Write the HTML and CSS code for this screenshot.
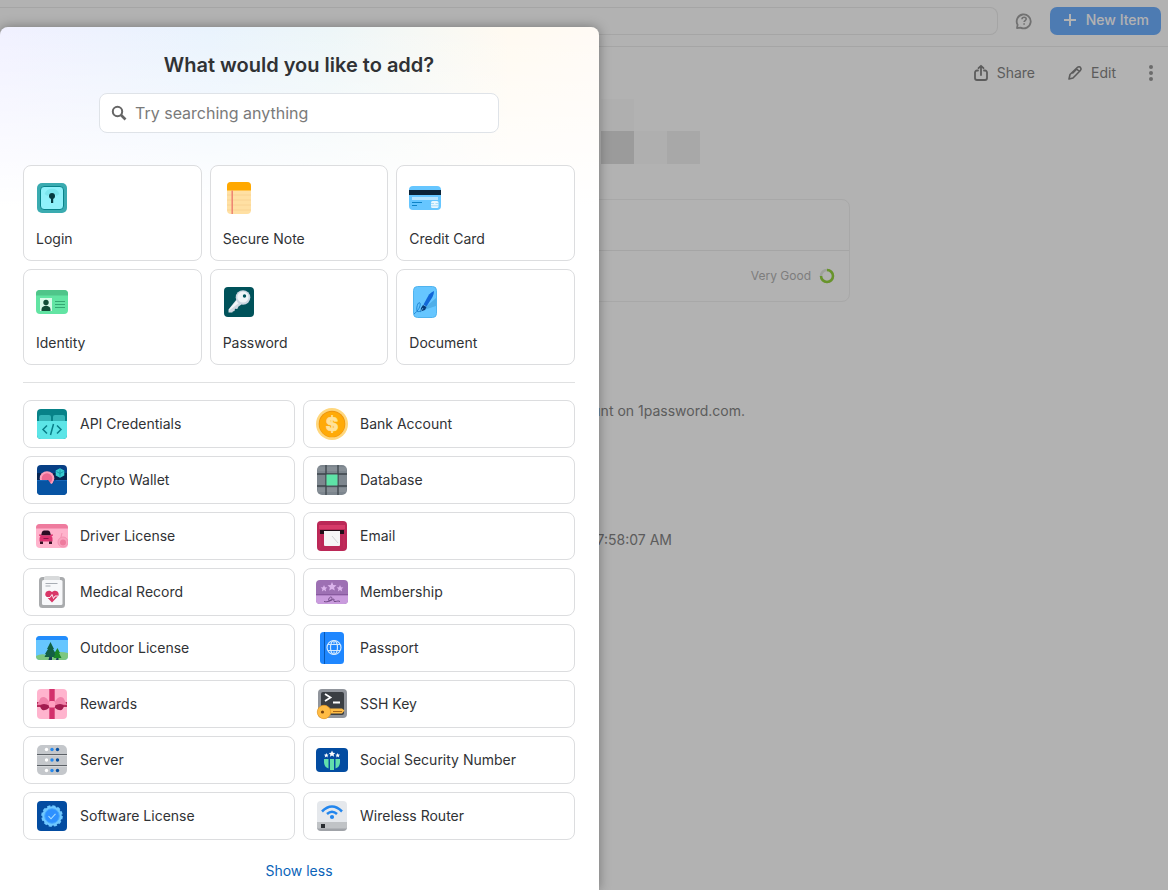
FILE: index.html
```html
<!DOCTYPE html>
<html lang="en">
<head>
    <meta charset="UTF-8">
    <meta name="viewport" content="width=device-width, initial-scale=1.0">
    <title>New Item</title>
    <link rel="stylesheet" href="styles.css">
</head>
<body>

    <div class="app">
        <header class="topbar">
            <input class="topbar-search" type="search" aria-label="Search all items">
            <button class="icon-button" aria-label="Help">
                <svg width="18" height="18" viewBox="0 0 18 18" fill="none" stroke="currentColor" stroke-width="1.8">
                    <path d="M2 16.200l.6-3.400A7 7 0 1 1 5.500 15.600z" stroke-linejoin="round"/>
                    <path d="M7 7.300c0-2.800 4.200-2.600 4.200-.2 0 1.500-2.100 1.500-2.100 3M9.100 11.200v1.600" stroke-width="1.600"/>
                </svg>
            </button>
            <button class="new-item">
                <svg width="14" height="14" viewBox="0 0 14 14" stroke="currentColor" stroke-width="2"><path d="M7 1v12M1 7h12"/></svg>
                New Item
            </button>
        </header>

        <div class="actions">
            <button class="action">
                <svg width="16" height="18" viewBox="0 0 16 18" fill="none" stroke="currentColor" stroke-width="1.8" stroke-linecap="round" stroke-linejoin="round">
                    <path d="M5 6.500H4a2 2 0 0 0-2 2V14a2 2 0 0 0 2 2h8a2 2 0 0 0 2-2V8.500a2 2 0 0 0-2-2h-1M8 11V2M5.500 4.200L8 1.800l2.500 2.400"/>
                </svg>
                Share
            </button>
            <button class="action">
                <svg width="16" height="16" viewBox="0 0 16 16" fill="none" stroke="currentColor" stroke-width="1.6" stroke-linejoin="round">
                    <path d="M2 14l1-4.500 7.500-7.200c1-.9 2.400-.5 3 .2.700.8.800 2-.1 3L6 13zM9.300 4.500l-4 4M9.300 3.500l3.200 3.200"/>
                </svg>
                Edit
            </button>
            <button class="icon-button more" aria-label="More actions">
                <svg width="6" height="18" viewBox="0 0 6 18" fill="currentColor"><circle cx="3" cy="3" r="2"/><circle cx="3" cy="9" r="2"/><circle cx="3" cy="15" r="2"/></svg>
            </button>
        </div>

        <main class="detail">
            <div class="mosaic">
                <span class="tile-pale"></span><span></span><span></span>
                <span class="tile-dark"></span><span class="tile-faint"></span><span class="tile-mid"></span>
            </div>
            <div class="fields">
                <div class="field"></div>
                <div class="field strength">
                    Very Good
                    <svg width="16" height="16" viewBox="0 0 16 16" fill="none" stroke-width="2.500">
                        <circle cx="8" cy="8" r="6" stroke="#e4e8e0"/>
                        <path d="M8 2a6 6 0 1 1-6 6" stroke="#95d43e"/>
                    </svg>
                </div>
            </div>
            <p class="hint">account on 1password.com.</p>
            <p class="modified">7:58:07 AM</p>
        </main>
    </div>

    <div class="overlay">
        <section class="dialog" role="dialog" aria-labelledby="dialogTitle">
            <h1 id="dialogTitle">What would you like to add?</h1>

            <label class="search">
                <svg width="16" height="16" viewBox="0 0 16 16" fill="none" stroke="currentColor" stroke-width="2"><circle cx="6.500" cy="6.500" r="4.700"/><path d="M10 10l4.500 4.500" stroke-width="2.600"/></svg>
                <input type="text" placeholder="Try searching anything" aria-label="Try searching anything">
            </label>

            <div class="featured">
                <button class="card">
                    <svg class="icon" viewBox="0 0 32 32">
                        <rect x="1" y="1" width="30" height="30" rx="5" fill="#3aabb0"/>
                        <rect x="4.500" y="4.500" width="23" height="23" rx="3.500" fill="#8ff1fa" stroke="#08838a"/>
                        <path d="M8.500 12a8 8 0 0 1 15 0l-3 2a5 5 0 0 0-9 0z" fill="#7ce6ee"/>
                        <circle cx="16" cy="14" r="3" fill="#053b40"/><path d="M15 15h2.200v6h-2.200z" fill="#053b40"/>
                    </svg>
                    Login
                </button>
                <button class="card">
                    <svg class="icon" viewBox="0 0 32 32">
                        <rect x="4" width="24" height="32" rx="4" fill="#ffe0a3"/>
                        <path d="M4 8.500V4a4 4 0 0 1 4-4h16a4 4 0 0 1 4 4v4.500z" fill="#ffa800"/>
                        <path d="M4 13h24M4 18h24M4 23h24M4 28h24" stroke="#f8d08f" stroke-width=".8"/>
                        <path d="M9.200 8.500V32" stroke="#ee8272" stroke-width="1.500"/>
                    </svg>
                    Secure Note
                </button>
                <button class="card">
                    <svg class="icon" viewBox="0 0 32 32">
                        <rect y="4" width="32" height="24" rx="4" fill="#66c6ff"/>
                        <path d="M0 8h32v5H0z" fill="#0a2236"/>
                        <path d="M3 15h26v3H3z" fill="#b8e5ff"/>
                        <path d="M3 20.500h10M3 23.500h5" stroke="#0d83c8"/>
                        <rect x="22" y="19" width="7.500" height="7" rx="1.500" fill="#e8f7ff"/>
                        <path d="M22 21.500h3M26.500 21.500h3M22 23.800h7.500" stroke="#8bd0f7" stroke-width=".7"/>
                    </svg>
                    Credit Card
                </button>
                <button class="card">
                    <svg class="icon" viewBox="0 0 32 32">
                        <rect y="4" width="32" height="24" rx="4" fill="#62e4a3"/>
                        <path d="M0 9.500V8a4 4 0 0 1 4-4h24a4 4 0 0 1 4 4v1.500z" fill="#4fc58a"/>
                        <path d="M4 12h12v13H4z" fill="#d9fbe9"/>
                        <circle cx="10" cy="16.500" r="2.700" fill="#124d36"/><path d="M5.500 25v-1.500c0-5 9-5 9 0V25z" fill="#124d36"/>
                        <path d="M19 15.500h10M19 18.500h10M19 21.500h10" stroke="#35a873"/>
                    </svg>
                    Identity
                </button>
                <button class="card">
                    <svg class="icon" viewBox="0 0 32 32">
                        <rect x="1" y="1" width="30" height="30" rx="4" fill="#00525a"/>
                        <path d="M13.500 13.500l5 5-3 2-1.200 2.500-2.300-.2-.5 2.300-1.700.4-.5 1H5.500v-3z" fill="#d0d9e2"/>
                        <path d="M14 14L6 23.500v1L16 17z" fill="#f2f5f8"/>
                        <circle cx="20" cy="11.500" r="7.300" fill="#cbd6e1"/><circle cx="20" cy="11" r="5.600" fill="#f1f5f8"/>
                        <circle cx="21.500" cy="10" r="1.700" fill="#00525a"/>
                    </svg>
                    Password
                </button>
                <button class="card">
                    <svg class="icon" viewBox="0 0 32 32">
                        <rect x="4.500" y=".5" width="23" height="31" rx="4" fill="#66c6ff" stroke="#50b3ee"/>
                        <path d="M27 12v8L12 25z" fill="#50afe9"/>
                        <path d="M14.500 18.500L20 8.500q3-3 5-3.500 0 3-1.500 6L17.500 20.500z" fill="#1267d7"/>
                        <path d="M14 19l3.500 2-1.500 3-4.500 1.500.5-3.500z" fill="#073a78"/><path d="M12 25l2-3" stroke="#66c6ff" stroke-width=".8"/>
                        <path d="M5 28c4-3 7-8 6-11-2-2-4 5-3 8 1 2 3-1 4 1" fill="none" stroke="#1278ca" stroke-width=".8"/>
                    </svg>
                    Document
                </button>
            </div>

            <hr>

            <div class="more-items">
                <button class="row">
                    <svg class="icon" viewBox="0 0 32 32">
                        <rect x="1" y="1" width="30" height="30" rx="4" fill="#078288"/>
                        <rect x="3" y="7" width="12" height="12" rx="2" fill="#35b5b8"/><rect x="17" y="7" width="12" height="12" rx="2" fill="#35b5b8"/>
                        <path d="M1 13h30v14a4 4 0 0 1-4 4H5a4 4 0 0 1-4-4z" fill="#5ce5e7"/>
                        <path d="M11 17.500l-4 4 4 4M21 17.500l4 4-4 4M17.500 16l-3 11" fill="none" stroke="#087e88" stroke-width="1.500"/>
                    </svg>
                    API Credentials
                </button>
                <button class="row">
                    <svg class="icon" viewBox="0 0 32 32">
                        <circle cx="16" cy="16" r="16" fill="#ffd77d"/><circle cx="16" cy="16" r="13.300" fill="#ed9610"/><circle cx="16" cy="16.300" r="12.600" fill="#ffaa08"/>
                        <text x="16" y="22.500" text-anchor="middle" font-size="19" font-weight="800" fill="#ffe29a" stroke="#ffe29a" stroke-width=".6">$</text>
                    </svg>
                    Bank Account
                </button>
                <button class="row">
                    <svg class="icon" viewBox="0 0 32 32">
                        <rect x="1" y="1" width="30" height="30" rx="4" fill="#073f85"/>
                        <path d="M1 9h30v7H1z" fill="#062551"/>
                        <circle cx="11" cy="14.500" r="7.300" fill="#ff9ebb"/><circle cx="11" cy="14.500" r="5.300" fill="#ef6891"/>
                        <path d="M24 4.200l4.300 2.400v4.800L24 13.800l-4.300-2.400V6.600z" fill="#38cbd0"/><path d="M24 5.500v7M20.500 7.500L24 9.500l3.500-2" fill="none" stroke="#118d9e" stroke-width=".8"/>
                        <path d="M1 16h11c1 0 2 4 4 4s1-4 3-4h12v11a4 4 0 0 1-4 4H5a4 4 0 0 1-4-4z" fill="#0754a3"/>
                        <path d="M1 16.500h10M20 16.500h11" stroke="#1767b8"/>
                    </svg>
                    Crypto Wallet
                </button>
                <button class="row">
                    <svg class="icon" viewBox="0 0 32 32">
                        <rect x="1" y="1" width="30" height="30" rx="5" fill="#7d868e"/>
                        <path d="M2 5h28M2 26h28" stroke="#878f96" stroke-width="4"/>
                        <path d="M10 1v30M22 1v30M1 10h30M1 22h30" stroke="#3c444b" stroke-width="1.300"/>
                        <path d="M10.500 10.500h11v11h-11z" fill="#5ee3a7"/>
                    </svg>
                    Database
                </button>
                <button class="row">
                    <svg class="icon" viewBox="0 0 32 32">
                        <rect y="4" width="32" height="24" rx="4" fill="#ffb3cc"/>
                        <path d="M0 8.500V8a4 4 0 0 1 4-4h24a4 4 0 0 1 4 4v.5z" fill="#ee7b9e"/>
                        <path d="M6 12q.5-1.500 2-1.500h4q1.500 0 2 1.500l1 3.500H5z" fill="#2b0c23"/>
                        <path d="M3 14.500h2l1 1h8l1-1h2v1l-1.500.8q1 1 1 2.200v3h-13v-3q0-1.200 1-2.200L3 15.500z" fill="#dc326f"/>
                        <path d="M4 21.500h3v2.500H4zM13 21.500h3v2.500h-3z" fill="#391024"/><path d="M7.500 18.500h5" stroke="#8e174b"/>
                        <circle cx="27" cy="22" r="5" fill="#f9a3bf" stroke="#f491b1"/><circle cx="27" cy="22.500" r="3" fill="#ee7b9e"/><path d="M25 17l1-4" fill="none" stroke="#f491b1"/>
                    </svg>
                    Driver License
                </button>
                <button class="row">
                    <svg class="icon" viewBox="0 0 32 32">
                        <rect x="1" y="1" width="30" height="30" rx="4" fill="#bb2857"/>
                        <path d="M3 5h26v4H3z" fill="#d63a69"/><path d="M4 10h24v4H4z" fill="#211019"/>
                        <path d="M8 11h16v14q0 1-1 1H9q-1 0-1-1z" fill="#f5f5f6"/><path d="M16 16l6 7" stroke="#c8c9cc" stroke-width=".8"/>
                        <path d="M4 14v14M28 14v14" stroke="#c62f5f"/>
                    </svg>
                    Email
                </button>
                <button class="row">
                    <svg class="icon" viewBox="0 0 32 32">
                        <rect x="3" y="1" width="26" height="31" rx="3.500" fill="#a9abad"/><rect x="6" y="4" width="20.500" height="25" rx="1.500" fill="#f7f8fa"/>
                        <path d="M8 4V2q0-2 2-2h12q2 0 2 2v2z" fill="#d8dadb"/><path d="M9.500 7.500h12M9.500 10h5" stroke="#a8adb4"/>
                        <path d="M16 26.500L9.800 20c-2-3 2-7.500 6.200-4 4.200-3.500 8.200 1 6.200 4z" fill="#d93667"/><path d="M9.500 21.500H14l2-3 1.500 4 1.500-2.500h3" fill="none" stroke="#fff" stroke-width=".9"/>
                    </svg>
                    Medical Record
                </button>
                <button class="row">
                    <svg class="icon" viewBox="0 0 32 32">
                        <rect y="4" width="32" height="24" rx="4" fill="#9d70b3"/><path d="M0 19h32v5a4 4 0 0 1-4 4H4a4 4 0 0 1-4-4z" fill="#c99bdd"/><path d="M0 18.800h32" stroke="#7f5298"/>
                        <path d="M16 6l1.300 3 3.200.3-2.400 2.100.7 3.200-2.800-1.700-2.800 1.700.7-3.200-2.400-2.100 3.200-.3zM8 9l1 2.200 2.400.2-1.800 1.600.5 2.400L8 14.100l-2.100 1.300.5-2.400-1.800-1.600 2.400-.2zM24 9l1 2.200 2.400.2-1.800 1.600.5 2.400-2.100-1.300-2.100 1.300.5-2.400-1.800-1.600 2.400-.2z" fill="#dbb4ec"/>
                        <path d="M8 25.500c4 1 7-1 8-3 0-2-2-2-3 0s0 3 2 2 3-2 3-1-1 2 1 2 3-1 5 0" fill="none" stroke="#68417d" stroke-width=".9"/>
                    </svg>
                    Membership
                </button>
                <button class="row">
                    <svg class="icon" viewBox="0 0 32 32">
                        <rect y="4" width="32" height="24" rx="4" fill="#66c6ff"/><path d="M0 8a4 4 0 0 1 4-4h24a4 4 0 0 1 4 4z" fill="#238dfc"/>
                        <path d="M0 24q5-3 11-1 11-5 21-2v3a4 4 0 0 1-4 4H4a4 4 0 0 1-4-4z" fill="#7dc780"/>
                        <path d="M13.500 24h2.500v4h-3.500zM21 24h1.500v4H20z" fill="#173b5b"/>
                        <path d="M14.500 10l3.500 7h-1l3 5h-1l1.500 3H8.500l1.500-3H9l3-5h-1z" fill="#126044"/><path d="M21.500 16l2.500 5h-1l2.500 5h-8l2-5h-1z" fill="#198427"/>
                    </svg>
                    Outdoor License
                </button>
                <button class="row">
                    <svg class="icon" viewBox="0 0 32 32">
                        <rect x="4" width="24" height="32" rx="3.500" fill="#1f87ff"/><path d="M8.500 0v32" stroke="#0758b5"/>
                        <g fill="none" stroke="#d0e8ff" stroke-width="1.200"><circle cx="18" cy="15.500" r="7"/><ellipse cx="18" cy="15.500" rx="3.500" ry="7"/><path d="M12 12.500h12M12 18.500h12M18 8.500v3M18 19.500v3"/></g>
                    </svg>
                    Passport
                </button>
                <button class="row">
                    <svg class="icon" viewBox="0 0 32 32">
                        <rect x="1" y="1" width="30" height="30" rx="4" fill="#ffb4ce"/><path d="M13.300 1h5.400v30h-5.400z" fill="#d3306c"/><path d="M1 14h30v5H1z" fill="#b92b5c"/>
                        <path d="M14 15C10 8 6 8 4 11l-3 6q6-1 13 1zM18 15c4-7 8-7 10-4l3 6q-6-1-13 1z" fill="#f184ab"/>
                        <path d="M14 18q-7-4-10 0 1 5 5 4 4-1 5-4zM18 18q7-4 10 0-1 5-5 4-4-1-5-4z" fill="#a21d50"/>
                        <rect x="12.800" y="13" width="6.400" height="6.500" rx="1.500" fill="#ff9fc0"/>
                    </svg>
                    Rewards
                </button>
                <button class="row">
                    <svg class="icon" viewBox="0 0 32 32">
                        <rect x="2" y="1" width="29" height="29" rx="4" fill="#91959c"/><rect x="5" y="4" width="23" height="23" rx="2" fill="#3a3e43"/>
                        <path d="M9 6l5.500 3.500L9 13M17 14.500h7" fill="none" stroke="#fff" stroke-width="1.800"/>
                        <path d="M12 20.500h14l2.500 2-2.500 3H12z" fill="#ffbc45"/><circle cx="8" cy="24" r="6.700" fill="#ffbc45" stroke="#e79b25" stroke-width=".8"/>
                        <circle cx="6.500" cy="24" r="1.600" fill="#784510"/><path d="M17 23.500h9" stroke="#9b5c13" stroke-width=".9"/>
                    </svg>
                    SSH Key
                </button>
                <button class="row">
                    <svg class="icon" viewBox="0 0 32 32">
                        <rect x="1" y="1" width="30" height="30" rx="5" fill="#c4c7cb"/><path d="M1 10.500h30M1 21.500h30" stroke="#5b6066"/><path d="M1 11.500h30M1 22.500h30" stroke="#d4d6d9"/>
                        <g fill="#fff"><circle cx="10.500" cy="5.500" r="1.700"/><circle cx="10.500" cy="16" r="1.700"/><circle cx="10.500" cy="26.500" r="1.700"/></g>
                        <g fill="#2488ed"><circle cx="16" cy="5.500" r="1.700"/><circle cx="16" cy="16" r="1.700"/><circle cx="16" cy="26.500" r="1.700"/></g>
                        <g fill="#0750a0"><circle cx="21.500" cy="5.500" r="1.700"/><circle cx="21.500" cy="16" r="1.700"/><circle cx="21.500" cy="26.500" r="1.700"/></g>
                    </svg>
                    Server
                </button>
                <button class="row">
                    <svg class="icon" viewBox="0 0 32 32">
                        <rect y="4" width="32" height="24" rx="4" fill="#034ca1"/>
                        <path d="M8 15h4.500v9.500Q8 23 8 18zM14 15h4v11h-4zM19.500 15H24v3q0 5-4.500 6.500z" fill="#62dfac"/>
                        <path d="M16 6.500l1 2.200 2.300.2-1.700 1.600.5 2.300-2.100-1.200-2.100 1.200.5-2.300-1.700-1.600 2.300-.2zM10.300 9l.7 1.500 1.700.2-1.300 1.100.4 1.700-1.500-.9-1.500.9.400-1.700-1.300-1.100 1.700-.2zM21.700 9l.7 1.500 1.700.2-1.300 1.100.4 1.700-1.500-.9-1.500.9.400-1.700-1.300-1.100 1.700-.2z" fill="#fff"/>
                    </svg>
                    Social Security Number
                </button>
                <button class="row">
                    <svg class="icon" viewBox="0 0 32 32">
                        <rect x="1" y="1" width="30" height="30" rx="4" fill="#034ca1"/>
                        <circle cx="16" cy="16" r="9.800" fill="#6fc8ff" stroke="#6fc8ff" stroke-width="2" stroke-dasharray="3.200 1.930"/>
                        <circle cx="16" cy="16" r="7.300" fill="#2d91ff" stroke="#49aafd"/><path d="M12.500 16.200l2.500 2.600 4.500-5" fill="none" stroke="#a9dfff" stroke-width="1.100"/>
                    </svg>
                    Software License
                </button>
                <button class="row">
                    <svg class="icon" viewBox="0 0 32 32">
                        <rect x="1" y="1" width="30" height="30" rx="4" fill="#e5e8ec"/><path d="M1 22h30v5a4 4 0 0 1-4 4H5a4 4 0 0 1-4-4z" fill="#a0a3a8"/><path d="M1 22h30v5q0 1-.8 1.500H1.800Q1 28 1 27z" fill="#c0c3c6"/><path d="M5 24h4v4H5z" fill="#292d31"/>
                        <circle cx="16" cy="17" r="2.100" fill="#2286ee"/><path d="M11 14q5-4.500 10 0M6 11.500q10-10 20 0" fill="none" stroke="#2286ee" stroke-width="2.500"/>
                    </svg>
                    Wireless Router
                </button>
            </div>

            <button class="show-less">Show less</button>
        </section>
    </div>

</body>
</html>
```
FILE: styles.css
```css
* {
    box-sizing: border-box;
}
body {
    font-family: Inter, 'Liberation Sans', sans-serif;
    font-size: 14px;
    line-height: 20px;
    background-color: #fff;
    color: #303235;
    margin: 0;
    position: relative;
    min-height: 100vh;
}
button, input {
    font: inherit;
    color: inherit;
}
button {
    cursor: pointer;
    background: none;
    border: none;
    padding: 0;
}
svg {
    flex-shrink: 0;
}

/* item view behind the dialog */
.topbar {
    display: flex;
    align-items: center;
    height: 47px;
    padding: 0 7px 4px 0;
    border-bottom: 1px solid #ececec;
}
.topbar-search {
    flex: 1;
    min-width: 0;
    height: 28px;
    padding: 0 12px;
    border: 1px solid #ececec;
    border-left: none;
    border-radius: 0 8px 8px 0;
    background: none;
    outline: none;
}
.icon-button {
    display: flex;
    align-items: center;
    justify-content: center;
    width: 52px;
    color: #a2a2a2;
}
.new-item {
    display: flex;
    align-items: center;
    gap: 9px;
    height: 28px;
    padding: 0 12px 2px 13px;
    border-radius: 7px;
    background-color: #6fb0ff;
    color: #fff;
    font-weight: 500;
}
.actions {
    display: flex;
    align-items: center;
    justify-content: flex-end;
    gap: 32px;
    height: 52px;
    padding-right: 14px;
}
.action {
    display: flex;
    align-items: center;
    gap: 8px;
    color: #858585;
}
.more {
    width: 6px;
    color: #9a9a9a;
}
.detail {
    max-width: 850px;
    padding-left: 312px;
}
.mosaic {
    display: grid;
    grid-template-columns: repeat(3, 33px);
    grid-template-rows: 32px 33px;
    justify-content: end;
    padding-right: 150px;
    margin-bottom: 35px;
}
.tile-pale {
    background-color: #fbfbfb;
}
.tile-dark {
    background-color: #dedede;
}
.tile-faint {
    background-color: #fbfbfb;
}
.tile-mid {
    background-color: #f1f1f1;
}
.fields {
    border: 1px solid #f1f1f1;
    border-radius: 8px;
}
.field {
    display: flex;
    align-items: center;
    justify-content: flex-end;
    height: 50px;
}
.strength {
    gap: 8px;
    height: 51px;
    padding-right: 14px;
    border-top: 1px solid #ededed;
    font-size: 12px;
    color: #b4b4b4;
}
.hint, .modified {
    margin: 0;
    text-align: right;
    color: #858585;
}
.hint {
    padding: 99px 105px 0 0;
}
.modified {
    padding: 109px 178px 0 0;
}

/* dialog */
.overlay {
    position: absolute;
    inset: 0;
    display: flex;
    padding-top: 27px;
    background-color: rgba(0, 0, 0, 0.3);
    overflow: hidden;
}
.dialog {
    width: 100%;
    max-width: 599px;
    padding: 25px 24px 0 23px;
    border-radius: 8px 8px 0 0;
    background:
        linear-gradient(to bottom, rgba(255, 255, 255, 0), #fff 180px),
        linear-gradient(to right, #f1f1ff, #e9f3fd 35%, #edf6f8 55%, #fffaf1 85%, #fffaf5);
    box-shadow: 0 0 12px rgba(0, 0, 0, 0.35);
}
h1 {
    margin: 0 0 15px;
    font-size: 20px;
    line-height: 26px;
    font-weight: 600;
    text-align: center;
}
.search {
    display: flex;
    align-items: center;
    gap: 8px;
    max-width: 400px;
    height: 40px;
    margin: 0 auto 32px;
    padding: 0 11px;
    border: 1px solid #dfe3e8;
    border-radius: 8px;
    background-color: #fff;
    color: #666;
}
.search input {
    flex: 1;
    min-width: 0;
    padding: 0;
    border: none;
    outline: none;
    background: none;
    font-size: 16px;
}
.search input::placeholder {
    color: #7a7a7a;
}
.featured {
    display: grid;
    grid-template-columns: repeat(3, 1fr);
    gap: 8px;
}
.card, .row {
    display: flex;
    border: 1px solid #dcdddf;
    border-radius: 8px;
    background-color: #fff;
    text-align: left;
}
.card {
    flex-direction: column;
    gap: 15px;
    height: 96px;
    padding: 16px 12px 0;
}
.icon {
    display: block;
    width: 32px;
    height: 32px;
}
hr {
    margin: 17px 0;
    border: none;
    border-top: 1px solid #e0e1e2;
}
.more-items {
    display: grid;
    grid-template-columns: repeat(2, 1fr);
    gap: 8px;
}
.row {
    align-items: center;
    gap: 12px;
    height: 48px;
    padding: 0 12px;
}
.show-less {
    display: block;
    margin: 21px auto 0;
    color: #0a63b8;
}
```
